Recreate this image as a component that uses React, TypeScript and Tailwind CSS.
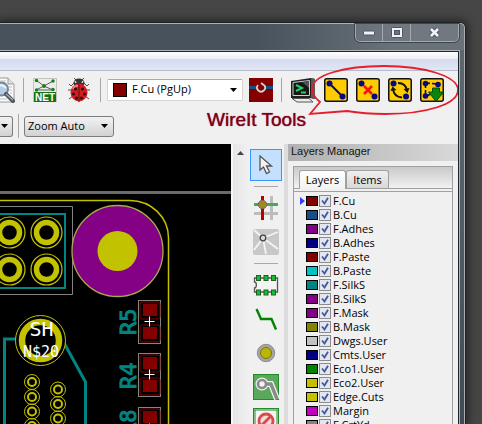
import type { ReactNode } from "react";

const YELLOW = "#c2c200";
const TEAL = "#008484";

const layers: { name: string; color: string }[] = [
  { name: "F.Cu", color: "#840000" },
  { name: "B.Cu", color: "#165084" },
  { name: "F.Adhes", color: "#840084" },
  { name: "B.Adhes", color: "#000084" },
  { name: "F.Paste", color: "#840000" },
  { name: "B.Paste", color: "#00c2c2" },
  { name: "F.SilkS", color: "#008484" },
  { name: "B.SilkS", color: "#840084" },
  { name: "F.Mask", color: "#840084" },
  { name: "B.Mask", color: "#848400" },
  { name: "Dwgs.User", color: "#c2c2c2" },
  { name: "Cmts.User", color: "#000084" },
  { name: "Eco1.User", color: "#008400" },
  { name: "Eco2.User", color: "#c2c200" },
  { name: "Edge.Cuts", color: "#c2c200" },
  { name: "Margin", color: "#c200c2" },
  { name: "F.CrtYd", color: "#848484" },
];

function CaptionButtons() {
  const base = "flex h-[17px] items-center justify-center";
  return (
    <div className="mr-[5px] flex self-start divide-x divide-[#a4a9ae] rounded-b-[5px] border border-t-0 border-[#a4a9ae] bg-white/5 outline outline-[#3d454d]">
      <button aria-label="Minimize" className={base + " w-[27px]"}>
        <svg width="14" height="6" viewBox="0 0 14 6">
          <rect x="1.5" y="1" width="11" height="4" rx="1" fill="#f2f2f2" stroke="#50546a" />
        </svg>
      </button>
      <button aria-label="Maximize" className={base + " w-[28px]"}>
        <svg width="12" height="11" viewBox="0 0 12 11">
          <rect x="0.5" y="0.5" width="11" height="10" rx="1" fill="#f2f2f2" stroke="#50546a" />
          <rect x="3.5" y="3.5" width="5" height="4" fill="#6b7380" stroke="#50546a" />
        </svg>
      </button>
      <button aria-label="Close" className={base + " w-[47px]"}>
        <svg width="13" height="11" viewBox="0 0 13 11">
          <path d="M3 2L10 9M10 2L3 9" stroke="#50546a" strokeWidth="4.6" />
          <path d="M3 2L10 9M10 2L3 9" stroke="#f2f2f2" strokeWidth="2.6" />
        </svg>
      </button>
    </div>
  );
}

function Separator() {
  return <div className="h-6 w-px shrink-0 bg-[#a5a5a5]" />;
}

function Arrow() {
  return (
    <svg width="7" height="4" viewBox="0 0 7 4" className="pointer-events-none absolute top-1/2 right-[5px] -translate-y-1/2">
      <path d="M0 0H7L3.5 4Z" fill="#000" />
    </svg>
  );
}

function IconButton({ label, children }: { label: string; children: ReactNode }) {
  return (
    <button aria-label={label} className="shrink-0">
      {children}
    </button>
  );
}

function WireTile({ label, children }: { label: string; children: ReactNode }) {
  return (
    <IconButton label={label}>
      <svg width="24" height="24" viewBox="0 0 24 24" className="block">
        <rect x="0.75" y="0.75" width="22.5" height="22.5" rx="2" fill="#ffcc00" stroke="#111" strokeWidth="1.5" />
        {children}
      </svg>
    </IconButton>
  );
}

function MainToolbar() {
  return (
    <div className="flex h-[37px] items-center gap-2">
      <IconButton label="Zoom to fit">
        <svg width="15" height="26" viewBox="9 0 15 26" className="block">
          <path d="M5 1H17L23 7V25H5Z" fill="#fafafa" stroke="#9a9a9a" />
          <path d="M17 1V7H23" fill="#e0e0e0" stroke="#9a9a9a" />
          <path d="M9 4H15M17 10H21M18 13H21M19 16H21M9 22H16" stroke="#c0c0c0" />
          <circle cx="10.5" cy="12" r="6.5" fill="#b3cdea" stroke="#7e848b" strokeWidth="2" />
          <path d="M7 10Q10 6 15 11" stroke="#e8f2fb" strokeWidth="2" fill="none" />
          <path d="M15 17L22 24" stroke="#50555c" strokeWidth="4" strokeLinecap="round" />
          <path d="M15 17L22 23" stroke="#a7adb4" strokeWidth="1.4" />
        </svg>
      </IconButton>
      <Separator />
      <IconButton label="Netlist">
        <svg width="26" height="26" viewBox="0 0 26 26" className="block">
          <rect x="1.5" y="1.5" width="23" height="23" fill="#ececec" stroke="#c3c3c3" />
          <path d="M4 3L12 9L21 4M12 9L4 13H21L12 9" stroke="#5c5c5c" fill="none" />
          <g fill="#148014">
            <circle cx="4.5" cy="3.5" r="1.7" />
            <circle cx="21" cy="4" r="1.7" />
            <circle cx="12" cy="9" r="1.9" />
            <circle cx="4.5" cy="13" r="1.7" />
            <circle cx="21" cy="12.5" r="1.7" />
          </g>
          <rect x="2" y="15" width="22" height="10" fill="#157215" />
          <text x="13" y="24" textAnchor="middle" fontFamily="Liberation Sans, sans-serif" fontWeight="700" fontSize="10" fill="#fff">
            NET
          </text>
        </svg>
      </IconButton>
      <IconButton label="Design rules check">
        <svg width="26" height="26" viewBox="0 0 26 26" className="block">
          <path d="M8 6L5 9L3 7M18 6L21 9L23 7M6 13L2 13M20 13L24 13M7 19L3 22M19 19L23 22M10 3L8 1M16 3L18 1" stroke="#5b4a48" fill="none" />
          <ellipse cx="13" cy="6" rx="5.5" ry="4.5" fill="#333" />
          <path d="M9 4L10 6M17 4L16 6" stroke="#ddd" strokeWidth="1.5" />
          <ellipse cx="13" cy="15.5" rx="8.5" ry="9" fill="#d31d22" />
          <path d="M7 12Q9 8 12 9" stroke="#f58080" strokeWidth="2" fill="none" />
          <path d="M13 7V25" stroke="#511" />
          <g fill="#241010">
            <circle cx="9.5" cy="12" r="1.6" />
            <circle cx="16.5" cy="12" r="1.6" />
            <circle cx="7.5" cy="17" r="1.5" />
            <circle cx="18.5" cy="17" r="1.5" />
            <circle cx="10.5" cy="21" r="1.5" />
            <circle cx="15.5" cy="21" r="1.5" />
          </g>
        </svg>
      </IconButton>
      <div className="flex items-center gap-[6px]">
        <Separator />
        <div className="relative flex h-[22px] w-[136px] items-center rounded-[2px] border border-[#d4d4d4] border-t-[#aaa] bg-white pl-[5px]">
          <span className="h-[14px] w-[14px] shrink-0 border border-black bg-[#840000]" />
          <select aria-label="Active layer" className="h-5 w-full appearance-none bg-transparent pl-[5px] text-[11px]">
            <option>F.Cu (PgUp)</option>
          </select>
          <Arrow />
        </div>
        <IconButton label="Layer pair">
          <svg width="24" height="24" viewBox="0 0 24 24" className="block">
            <rect width="24" height="24" fill="#840000" />
            <rect y="8" width="24" height="3" fill="#165084" />
            <rect x="7" y="5" width="10" height="9" fill="#840000" />
            <path d="M9 7A4 4 0 1 0 15.500 7.500L12 5" stroke="#d4d4d4" strokeWidth="1.8" fill="none" />
          </svg>
        </IconButton>
      </div>
      <Separator />
      <IconButton label="Scripting console">
        <svg width="26" height="26" viewBox="0 0 26 26" className="block">
          <path d="M1 4L21 1L25 2V22L20 21H1Z" fill="#202020" />
          <path d="M21 1L25 2V22L21 21Z" fill="#5a5a5a" />
          <path d="M3 5.5L19.5 3.5V18.5H3Z" fill="#161616" stroke="#cfcfcf" />
          <path d="M12 5L19 4V11Z" fill="#4c5157" />
          <path d="M6 8L12 11L6 14M11 15.500H16" stroke="#25d068" strokeWidth="2" fill="none" />
          <path d="M2 21.5H19L23 25H7Z" fill="#ececec" stroke="#555" />
        </svg>
      </IconButton>
      <div className="relative flex gap-2">
        <WireTile label="Add wire">
          <path d="M6 6L18 18" stroke="#080880" strokeWidth="2" />
          <circle cx="5.5" cy="5.5" r="3" fill="#080880" />
          <circle cx="18.5" cy="18.5" r="3" fill="#080880" />
        </WireTile>
        <WireTile label="Cut wire">
          <path d="M8 8L16 16M16 8L8 16" stroke="#ff1010" strokeWidth="2.5" />
          <circle cx="5.5" cy="5.5" r="3" fill="#080880" />
          <circle cx="18.5" cy="18.5" r="3" fill="#080880" />
        </WireTile>
        <WireTile label="Swap pads">
          <path d="M10 5Q18 5 19 13M14 19.500Q6 19 5 11" stroke="#111" strokeWidth="2" fill="none" />
          <path d="M15.500 11L21.500 10L19.500 15ZM2.500 13L8.500 12L4.500 8.500Z" fill="#111" />
          <circle cx="5.5" cy="5.5" r="3" fill="#080880" />
          <circle cx="18" cy="18.5" r="3" fill="#080880" />
        </WireTile>
        <WireTile label="Update netlist">
          <path d="M5.5 6V18M6 5L18 6M7 18L12 15" stroke="#080880" strokeWidth="1.6" strokeDasharray="4 2" />
          <circle cx="5.5" cy="5.5" r="2.8" fill="#080880" />
          <circle cx="18" cy="6.5" r="2.8" fill="#080880" />
          <circle cx="5.5" cy="18" r="2.8" fill="#080880" />
          <path d="M12.500 10H19.500V14H23.500L16 23.500L8.500 14H12.500Z" fill="#0a850a" stroke="#064d06" />
        </WireTile>
        {/* Callout balloon drawn round the four wire buttons */}
        <svg width="152" height="54" viewBox="308 64 152 54" className="pointer-events-none absolute -top-[14px] -left-[16px]">
          <path
            d="M320 102L310 114L347 111C359 113 371 114 385 114C427 114 458 104 458 90C458 76 424 66 384 66C344 66 312 75 312 89C312 94 315 98 320 102Z"
            fill="none"
            stroke="#e3202a"
            strokeWidth="1.8"
          />
        </svg>
      </div>
    </div>
  );
}

function OptionsToolbar() {
  const combo =
    "relative flex h-[21px] items-center border border-[#7c7c7c] bg-linear-to-b from-[#f2f2f2] to-[#d2d2d2]";
  return (
    <div className="flex h-9 items-center gap-[5px]">
      <div className={combo + " w-[13px] rounded-r-[3px] border-l-0"}>
        <select aria-label="Grid" className="h-5 w-full appearance-none bg-transparent" />
        <svg width="7" height="4" viewBox="0 0 7 4" className="pointer-events-none absolute top-1/2 right-[4px] -translate-y-1/2">
          <path d="M0 0H7L3.5 4Z" fill="#000" />
        </svg>
      </div>
      <Separator />
      <div className={combo + " w-[90px] rounded-[3px]"}>
        <select aria-label="Zoom" className="h-5 w-full appearance-none bg-transparent pl-[3px] text-[11px]">
          <option>Zoom Auto</option>
        </select>
        <Arrow />
      </div>
      <p className="ml-[88px] self-start font-['Liberation_Sans',Arial,sans-serif] text-[19px] leading-6 whitespace-nowrap text-[#80001c] text-shadow-[0_0_1px_#80001c]">
        WireIt Tools
      </p>
    </div>
  );
}

function Pad({ x, y }: { x: number; y: number }) {
  return (
    <g fill="none" stroke={YELLOW}>
      <circle cx={x} cy={y} r="15.5" strokeWidth="1.2" />
      <circle cx={x} cy={y} r="10" strokeWidth="5.5" />
    </g>
  );
}

function SmallPad({ x, y }: { x: number; y: number }) {
  return (
    <g fill="none" stroke={YELLOW}>
      <circle cx={x} cy={y} r="7.5" strokeWidth="1" />
      <circle cx={x} cy={y} r="4" strokeWidth="2" />
    </g>
  );
}

function Resistor({ y, name, textStart }: { y: number; name: string; textStart: number }) {
  return (
    <g>
      <rect x="138.5" y={y + 0.5} width="22" height="43" fill="none" stroke="#848484" />
      <rect x="140" y={y + 2} width="20" height="17" rx="2" fill="none" stroke="#840000" />
      <rect x="140" y={y + 25} width="20" height="17" rx="2" fill="none" stroke="#840000" />
      <rect x="143" y={y + 4} width="14" height="12" fill="#840000" />
      <rect x="143" y={y + 27} width="14" height="12" fill="#840000" />
      <path d={`M144.5 ${y + 21.5}H154.5M149.5 ${y + 16.5}V${y + 26.5}`} stroke="#fff" />
      <text
        transform={`translate(136 ${textStart}) rotate(-90)`}
        fontFamily="DejaVu Sans Mono, monospace"
        fontSize="22"
        fill={TEAL}
        stroke={TEAL}
        strokeWidth="1"
      >
        {name}
      </text>
    </g>
  );
}

function BoardCanvas() {
  return (
    <div className="min-w-0 flex-1 overflow-hidden bg-black">
      <svg width="231" height="280" viewBox="0 144 231 280" className="block">
        <rect y="191" width="231" height="3" fill="#6b6b6b" />
        <path d="M0 200.5H130C151 200.5 168.5 217 168.5 238V424" fill="none" stroke={YELLOW} strokeWidth="1.5" />
        <path d="M0 206.5H72.5V294.5H0" fill="none" stroke="#848484" />
        <path d="M0 214H65V288H0" fill="none" stroke={TEAL} strokeWidth="2" />
        <Pad x={9.5} y={232.5} />
        <Pad x={46.5} y={232.5} />
        <Pad x={9.5} y={269.5} />
        <Pad x={46.5} y={269.5} />
        <circle cx="117.5" cy="251" r="45.5" fill="#840084" stroke="#a9a94a" strokeWidth="1.3" />
        <circle cx="117.5" cy="251" r="20" fill={YELLOW} />

        <path d="M19 339H4.5V424M63 341L85.5 382V424" fill="none" stroke={TEAL} strokeWidth="3" />
        <circle cx="40.5" cy="340.5" r="25" fill="#000" stroke={YELLOW} />
        <circle cx="40.5" cy="340.5" r="18.5" fill="none" stroke={YELLOW} strokeWidth="6.5" />
        <g fill="#fff" textAnchor="middle" fontFamily="DejaVu Sans Mono, monospace">
          <text x="41.5" y="336" fontSize="20">SH</text>
          <text x="41" y="357" fontSize="15">N$20</text>
        </g>
        <SmallPad x={32} y={382} />
        <SmallPad x={32} y={397} />
        <SmallPad x={32} y={411.5} />
        <SmallPad x={32} y={426} />
        <SmallPad x={58} y={389.5} />
        <SmallPad x={58} y={404} />
        <SmallPad x={58} y={418.5} />
        <Resistor y={300} name="R5" textStart={335} />
        <Resistor y={353} name="R4" textStart={389} />
        <Resistor y={407} name="R8" textStart={436} />
      </svg>
    </div>
  );
}

function ToolIcon({ label, children }: { label: string; children: ReactNode }) {
  return (
    <button aria-label={label} className="shrink-0">
      <svg width="26" height="26" viewBox="0 0 26 26" className="block" fill="none">
        {children}
      </svg>
    </button>
  );
}

function ToolColumn() {
  const rule = "h-px w-6 shrink-0 bg-[#a8a8a8]";
  return (
    <div className="flex w-9 shrink-0 flex-col items-center overflow-hidden">
      <div className="py-[5px]">
        <button aria-label="Select" className="flex h-8 w-8 items-center justify-center border border-[#3399ff] bg-[#c4e0ff]">
          <svg width="14" height="20" viewBox="0 0 14 20">
            <path d="M1 1V15L4.5 12L7.5 18.5L10.5 17L7.5 11H12.5Z" fill="#f3f3f3" stroke="#555" strokeWidth="1.3" />
          </svg>
        </button>
      </div>
      <div className="flex flex-col items-center gap-2">
        <div className={rule} />
        <ToolIcon label="Highlight net">
          <path d="M18.5 1V25M1 18.5H25" stroke="#bcbcbc" strokeWidth="3" />
          <path d="M1 9.5H25" stroke="#4fa552" strokeWidth="3" />
          <path d="M9.5 1V25" stroke="#b90000" strokeWidth="3" />
          <circle cx="9.5" cy="9.5" r="4.2" fill="#a08a20" stroke="#766" />
        </ToolIcon>
        <ToolIcon label="Local ratsnest">
          <rect width="26" height="26" rx="2" fill="#c8c8c8" />
          <path d="M10 9L1 1M10 9L25 3M10 9L25 20M10 9L1 21M10 9L13 25" stroke="#f4f4f4" strokeWidth="1.8" />
          <circle cx="10" cy="9" r="2.8" fill="#ddd" stroke="#444" strokeWidth="1.3" />
        </ToolIcon>
        <div className={rule} />
        <ToolIcon label="Add footprint">
          <path d="M1.5 6H24.5V20H1.5V16C4 16 4 10 1.5 10Z" fill="#f4f4f4" stroke="#555" strokeWidth="1.3" />
          <g fill="#0ec22a" stroke="#285c2a">
            <rect x="3.5" y="3.5" width="4" height="5" />
            <rect x="11" y="3.5" width="4" height="5" />
            <rect x="18.5" y="3.5" width="4" height="5" />
            <rect x="3.5" y="18" width="4" height="5" />
            <rect x="11" y="18" width="4" height="5" />
            <rect x="18.5" y="18" width="4" height="5" />
          </g>
        </ToolIcon>
        <ToolIcon label="Add track">
          <path d="M3.5 3L8 13H18.5L23 23.5" stroke="#008400" strokeWidth="2.4" />
        </ToolIcon>
        <ToolIcon label="Add via">
          <circle cx="13" cy="13" r="8.7" fill="#a5a5a5" stroke="#8d8d8d" />
          <circle cx="13" cy="13" r="5.5" fill="#bcb600" stroke="#78741c" />
        </ToolIcon>
        <ToolIcon label="Add zone">
          <rect x="0.5" y="0.5" width="25" height="25" fill="#5aa85c" stroke="#238a28" />
          <path d="M9 10H18L24 25" stroke="#f2f2f2" strokeWidth="6" />
          <circle cx="9" cy="10" r="6.5" fill="#f2f2f2" />
          <path d="M9 10H18L24 25" stroke="#8a8a8a" strokeWidth="3.4" />
          <circle cx="9" cy="10" r="4" fill="#f2f2f2" stroke="#8a8a8a" strokeWidth="2.6" />
        </ToolIcon>
        <ToolIcon label="Add keepout">
          <rect x="1.5" y="1.5" width="23" height="23" fill="#f4f4f4" stroke="#238a28" strokeWidth="3" strokeDasharray="1 1" />
          <rect x="0.5" y="0.5" width="25" height="25" stroke="#238a28" />
          <circle cx="13" cy="13" r="7" fill="#f0dede" stroke="#d94b4b" strokeWidth="2.8" />
          <path d="M8 18L18 8" stroke="#d94b4b" strokeWidth="2.8" />
        </ToolIcon>
      </div>
    </div>
  );
}

function LayerRow({ name, color, active }: { name: string; color: string; active: boolean }) {
  return (
    <li className="flex h-[14px] items-center">
      <span className="w-3 shrink-0 pl-[6px]">
        {active && (
          <svg width="5" height="8" viewBox="0 0 5 8" className="block">
            <path d="M0 0L5 4L0 8Z" fill="#3c3cff" />
          </svg>
        )}
      </span>
      <button aria-label={name + " color"} className="h-[10px] w-3 shrink-0 border border-black" style={{ backgroundColor: color }} />
      <label className="flex items-center">
        <span className="relative ml-px block h-3 w-3">
          <input type="checkbox" defaultChecked className="peer block h-3 w-3 appearance-none border border-[#8c8c8c] bg-[#e3e6ec]" />
          <svg width="8" height="8" viewBox="0 0 8 8" className="pointer-events-none absolute top-[2px] left-[2px] hidden peer-checked:block">
            <path d="M1 3.5L3.5 6.5L7 0.8" stroke="#43589c" strokeWidth="1.8" fill="none" />
          </svg>
        </span>
        <span className="pl-[2px] leading-[14px]">{name}</span>
      </label>
    </li>
  );
}

function LayersManager() {
  return (
    <aside className="flex w-[174px] shrink-0 flex-col border-l-4 border-[#dcdcdc]">
      <h2 className="h-[17px] shrink-0 bg-linear-to-r from-[#b0b0b0] to-[#d8d8d8] pl-[3px] font-['Liberation_Sans',Arial,sans-serif] text-[11px] leading-[15px] text-[#111]">
        Layers Manager
      </h2>
      <div className="mx-[5px] mt-[5px] flex min-h-0 flex-1 flex-col border border-b-0 border-[#a0a0a0] text-[11px]">
        <div role="tablist" className="flex h-[22px] shrink-0 items-end border-b border-[#a0a0a0] bg-linear-to-b from-[#c9c9c9] to-[#f2f2f2] pl-[5px]">
          <button role="tab" aria-selected="true" className="-mb-px h-[19px] w-[47px] rounded-t-[3px] border border-b-0 border-[#a0a0a0] bg-linear-to-b from-white to-[#f2f2f2] leading-[18px]">
            Layers
          </button>
          <button role="tab" aria-selected="false" className="h-[18px] w-[43px] rounded-t-[3px] border border-b-0 border-[#a0a0a0] bg-linear-to-b from-[#f0f0f0] to-[#d8d8d8] leading-[18px]">
            Items
          </button>
        </div>
        <div className="mt-[2px] min-h-0 flex-1 overflow-hidden border-t border-[#a0a0a0]">
          <ul className="pt-[2px]">
            {layers.map((layer, i) => (
              <LayerRow key={layer.name} {...layer} active={i === 0} />
            ))}
          </ul>
        </div>
      </div>
    </aside>
  );
}

export default function App() {
  return (
    <div className="h-screen overflow-hidden bg-[#464646] pt-[22px] pr-4 font-['Open_Sans','Noto_Sans',sans-serif] text-black">
      <main className="flex h-full flex-col rounded-tr-[6px] border-t border-r border-[#1c2126] bg-linear-to-b from-[#5f6870] via-[#505c66] to-[#3e4a55] shadow-[0_0_10px_2px_rgba(0,0,0,0.5)]">
        <div className="flex min-h-0 flex-1 flex-col rounded-tr-[5px] border-t border-r border-[#aab0b5]">
          <header className="flex h-[26px] shrink-0 justify-end rounded-tr-[5px] bg-linear-to-r from-[#47525c] from-55% to-[#697179] to-85%">
            <CaptionButtons />
          </header>
          <div className="mr-1 flex min-h-0 flex-1 flex-col border-t border-r border-[#b0b5ba]">
            <div className="flex min-h-0 flex-1 flex-col overflow-hidden border-t border-r border-[#20252a] bg-[#f0f0f0]">
              <nav className="shrink-0 border-b border-[#b6bccc]">
                <div className="h-[7px] bg-linear-to-b from-white to-[#e8edf7]" />
                <div className="h-[11px] bg-linear-to-b from-[#d5daed] to-[#e1e6f6]" />
              </nav>
              <div className="shrink-0">
                <MainToolbar />
                <OptionsToolbar />
              </div>
              <div className="flex min-h-0 flex-1">
                <BoardCanvas />
                <div className="flex w-[17px] shrink-0 justify-center border-l-2 border-[#f8f8f8] bg-linear-to-r from-[#e6e6e6] to-[#f0f0f0] pt-[7px]">
                  <svg width="7" height="4" viewBox="0 0 7 4">
                    <path d="M0 4H7L3.5 0Z" fill="#444" />
                  </svg>
                </div>
                <ToolColumn />
                <LayersManager />
              </div>
            </div>
          </div>
        </div>
      </main>
    </div>
  );
}
